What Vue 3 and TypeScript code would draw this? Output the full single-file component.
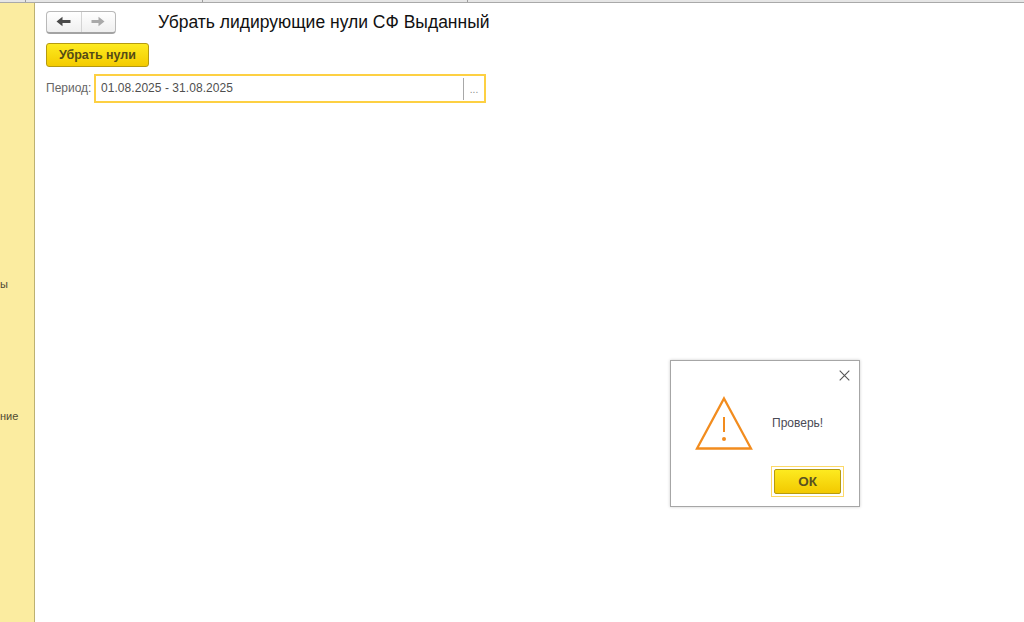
<script setup lang="ts">
/**
 * Processing form with an open warning dialog
 */
const title = 'Убрать лидирующие нули СФ Выданный'
const period = '01.08.2025 - 31.08.2025'
</script>

<template>
  <div class="app">
    <div class="tabs">
      <span class="tab tab-first"></span>
      <span class="tab tab-second"></span>
      <span class="tab tab-third"></span>
    </div>
    <div class="body">
      <aside class="sidebar">
        <span class="side-item side-item-a">ы</span>
        <span class="side-item side-item-b">ние</span>
      </aside>
      <main class="content">
        <div class="header">
          <div class="nav">
            <button class="nav-btn">
              <svg width="15" height="11" viewBox="0 0 15 11"><path d="M0.5 5.5 L6.5 0.8 V4 H14.5 V7 H6.5 V10.2 Z" fill="#4a4a4a" /></svg>
            </button>
            <button class="nav-btn">
              <svg width="14" height="11" viewBox="0 0 14 11"><path d="M13.5 5.5 L7.5 0.8 V4 H0.5 V7 H7.5 V10.2 Z" fill="#a9a9a9" /></svg>
            </button>
          </div>
          <h1 class="title">{{ title }}</h1>
        </div>
        <button class="action-btn">Убрать нули</button>
        <div class="field-row">
          <label class="field-label">Период:</label>
          <div class="field">
            <span class="field-value">{{ period }}</span>
            <span class="field-choice">...</span>
          </div>
        </div>
      </main>
    </div>

    <div class="dialog" role="dialog">
      <button class="dialog-close" aria-label="Закрыть">
        <svg width="11" height="11" viewBox="0 0 11 11"><path d="M0.7 0.7 L10.3 10.3 M10.3 0.7 L0.7 10.3" stroke="#555" stroke-width="1.1" fill="none" /></svg>
      </button>
      <div class="dialog-main">
        <svg class="warn-icon" width="58" height="54" viewBox="0 0 58 54">
          <path d="M29 2.5 L56 52.5 H2 Z" fill="none" stroke="#f28c1e" stroke-width="2.3" stroke-linejoin="miter" />
          <path d="M29 21 V36" stroke="#f28c1e" stroke-width="2" fill="none" />
          <circle cx="29" cy="43" r="2" fill="#f28c1e" />
        </svg>
        <p class="dialog-text">Проверь!</p>
      </div>
      <div class="dialog-footer">
        <div class="ok-focus">
          <button class="ok-btn">ОК</button>
        </div>
      </div>
    </div>
  </div>
</template>

<style>
html,
body {
  margin: 0;
  background: #fff;
}
</style>

<style scoped>
.app {
  position: relative;
  width: 1024px;
  height: 622px;
  overflow: hidden;
  background: #fff;
  font-family: "Liberation Sans", Arial, sans-serif;
  display: flex;
  flex-direction: column;
}

.tabs {
  height: 2px;
  flex: none;
  display: flex;
  background: #e6e6e6;
  border-bottom: 1px solid #a9a9a9;
}

.tab {
  height: 2px;
  border-right: 1px solid #9c9c9c;
  flex: none;
}

.tab-first { width: 25px; }
.tab-second { width: 176px; }
.tab-third { width: 264px; }

.body {
  flex: 1;
  display: flex;
  min-height: 0;
}

.sidebar {
  position: relative;
  width: 34px;
  flex: none;
  background: #fbeca0;
  border-right: 1px solid #bdb172;
}

.side-item {
  position: absolute;
  left: 0;
  font-size: 11px;
  color: #4f4b33;
  line-height: 13px;
}

.side-item-a { top: 275px; }
.side-item-b { top: 407px; }

.content {
  flex: 1;
  padding: 7px 0 0 11px;
  display: flex;
  flex-direction: column;
  align-items: flex-start;
}

.header {
  display: flex;
  align-items: center;
  height: 24px;
}

.nav {
  display: flex;
  width: 70px;
  height: 23px;
  box-sizing: border-box;
  border: 1px solid #b9b9b9;
  border-bottom: 2px solid #a3a3a3;
  border-radius: 4px;
  background: linear-gradient(#fff, #efefef);
  overflow: hidden;
}

.nav-btn {
  flex: 1;
  padding: 0;
  border: none;
  background: none;
  display: flex;
  align-items: center;
  justify-content: center;
}

.nav-btn + .nav-btn {
  border-left: 1px solid #d4d4d4;
}

.title {
  margin: 0 0 0 42px;
  font-size: 17.5px;
  font-weight: 400;
  color: #111;
  line-height: 24px;
  white-space: nowrap;
}

.action-btn {
  margin-top: 9px;
  width: 103px;
  height: 24px;
  padding: 0;
  border: 1px solid #b59a10;
  border-radius: 3px;
  background: linear-gradient(#fdea20, #f4cb00);
  color: #544b16;
  font-family: inherit;
  font-size: 12.5px;
  font-weight: 700;
}

.field-row {
  display: flex;
  align-items: center;
  margin-top: 7px;
}

.field-label {
  width: 48px;
  padding-bottom: 1px;
  font-size: 12px;
  color: #666;
}

.field {
  width: 392px;
  height: 29px;
  box-sizing: border-box;
  border: 2px solid #fdd043;
  display: flex;
  align-items: center;
  background: #fff;
}

.field-value {
  flex: 1;
  padding: 0 0 1px 5px;
  font-size: 12px;
  letter-spacing: 0.05px;
  color: #4f4f4f;
}

.field-choice {
  width: 20px;
  height: 22px;
  border-left: 1px solid #a8a8a8;
  text-align: center;
  font-size: 10px;
  line-height: 24px;
  color: #8a8a8a;
}

.dialog {
  position: absolute;
  left: 670px;
  top: 360px;
  width: 190px;
  height: 147px;
  box-sizing: border-box;
  background: #fff;
  border: 1px solid #a6a6a6;
  box-shadow: 0 0 3px rgba(0, 0, 0, 0.2);
  display: flex;
  flex-direction: column;
}

.dialog-close {
  position: absolute;
  right: 9px;
  top: 9px;
  padding: 0;
  border: none;
  background: none;
  display: flex;
}

.dialog-main {
  display: flex;
  align-items: center;
  padding: 35px 0 0 24px;
}

.dialog-text {
  margin: 0 0 0 19px;
  font-size: 12px;
  color: #4a4a55;
}

.dialog-footer {
  margin-top: auto;
  padding: 0 15px 9px 0;
  display: flex;
  justify-content: flex-end;
}

.ok-focus {
  padding: 2px;
  border: 1px solid #fdd968;
}

.ok-btn {
  display: block;
  width: 67px;
  height: 25px;
  padding: 0;
  border: 1px solid #b59a10;
  border-radius: 2px;
  background: linear-gradient(#fdea20, #f2c900);
  color: #5a5220;
  font-family: inherit;
  font-size: 13.5px;
  font-weight: 700;
}
</style>
